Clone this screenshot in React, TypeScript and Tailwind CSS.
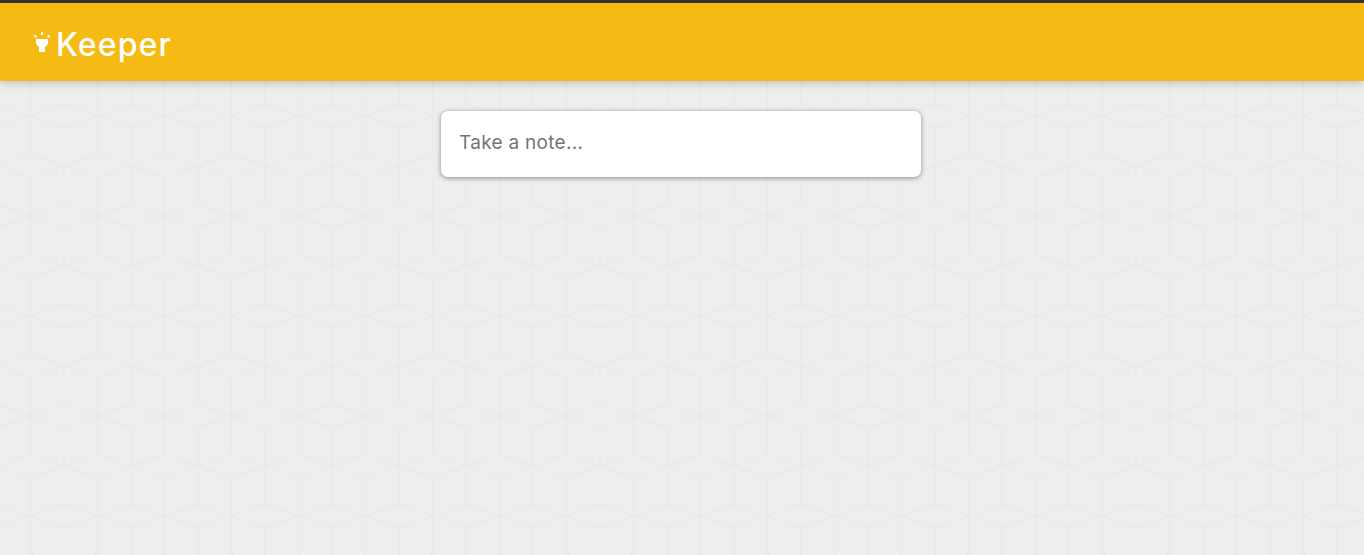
export default function App() {
  return (
    <div className="min-h-screen bg-[#eeeeee] bg-[url('data:image/svg+xml,%3Csvg%20xmlns=%22http://www.w3.org/2000/svg%22%20width=%2267%22%20height=%22100%22%3E%3Cpath%20fill=%22none%22%20stroke=%22%23e8e8e8%22%20d=%22M30.5%2016L64%204L97.5%2016L64%2028ZM-36.5%2016L-3%204L30.5%2016L-3%2028ZM-3%2066L30.5%2054L64%2066L30.5%2078ZM64%2066L97.5%2054L131%2066L97.5%2078ZM30.5%200V54M30.5%2078V100M64%200V4M64%2028V100%22/%3E%3C/svg%3E')] font-['Inter',sans-serif]">
      <header className="flex h-[81px] items-center border-t-[3px] border-[#333333] bg-[#f5ba13] pl-[30px] shadow-[0_0_10px_rgba(0,0,0,0.3)]">
        <svg viewBox="0 0 24 24" className="h-6 w-6 fill-white" aria-hidden="true">
          <path d="M6 14l3 3v5h6v-5l3-3V9H6zm5-12h2v3h-2zM3.5 5.875L4.914 4.46l2.12 2.122L5.62 7.997zm13.46.71l2.123-2.12 1.414 1.414L18.375 8z" />
        </svg>
        <h1 className="ml-0.5 pt-[6px] text-[32px] leading-none font-medium tracking-[1.1px] text-white">Keeper</h1>
      </header>
      <main className="flex justify-center pt-[30px] pr-0.5">
        <form className="w-[480px] rounded-[7px] bg-white pt-[19px] pr-[19px] pb-[21px] pl-[18px] shadow-[0_1px_5px_rgb(138,137,137)]">
          <input
            type="text"
            placeholder="Take a note..."
            className="block h-[26px] w-full bg-transparent text-[19px] tracking-[0.3px] text-[#333333] outline-none placeholder:text-[#757575]"
          />
        </form>
      </main>
    </div>
  )
}
